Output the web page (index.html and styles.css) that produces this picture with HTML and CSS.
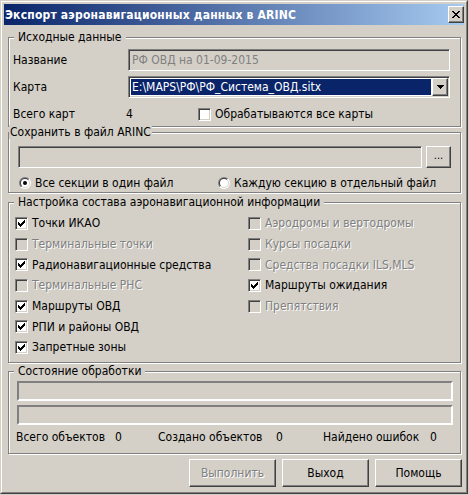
FILE: index.html
```html
<!DOCTYPE html>
<html lang="ru">
<head>
<meta charset="utf-8">
<title>Экспорт аэронавигационных данных в ARINC</title>
<link rel="stylesheet" href="styles.css">
</head>
<body>
<div class="window">
  <div class="frame">
    <div class="titlebar">
      <span class="title">Экспорт аэронавигационных данных в ARINC</span>
      <div class="close raised">
        <svg width="8" height="7" viewBox="0 0 8 7" shape-rendering="crispEdges"><path d="M0 0h2v1h-2z M6 0h2v1h-2z M1 1h2v1h-2z M5 1h2v1h-2z M2 2h4v1h-4z M3 3h2v1h-2z M2 4h4v1h-4z M1 5h2v1h-2z M5 5h2v1h-2z M0 6h2v1h-2z M6 6h2v1h-2z" fill="#000"/></svg>
      </div>
    </div>
    <div class="content">
      <div class="group g1">
        <span class="legend">Исходные данные</span>
        <div class="form-row">
          <span class="lbl">Название</span>
          <div class="edit sunken disabled-edit">РФ ОВД на 01-09-2015</div>
        </div>
        <div class="form-row">
          <span class="lbl">Карта</span>
          <div class="combo sunken">
            <div class="combo-sel">E:\MAPS\РФ\РФ_Система_ОВД.sitx</div>
            <div class="combo-btn raised">
              <svg width="7" height="4" viewBox="0 0 7 4" shape-rendering="crispEdges"><path d="M0 0h7v1h-7z M1 1h5v1h-5z M2 2h3v1h-3z M3 3h1v1h-1z" fill="#000"/></svg>
            </div>
          </div>
        </div>
        <div class="form-row count-row">
          <span class="lbl lbl-count">Всего карт</span>
          <span class="count">4</span>
          <label class="check">
            <span class="cb"></span>
            <span>Обрабатываются все карты</span>
          </label>
        </div>
      </div>

      <div class="group g2">
        <span class="legend legend-tight">Сохранить в файл ARINC</span>
        <div class="file-row">
          <div class="edit sunken file-edit"></div>
          <div class="btn raised browse">...</div>
        </div>
        <div class="radio-row">
          <label class="radio">
            <svg width="12" height="12" viewBox="0 0 12 12">
              <defs>
                <linearGradient id="ro" x1="0" y1="0" x2="1" y2="1"><stop offset="0.5" stop-color="#808080"/><stop offset="0.5" stop-color="#ffffff"/></linearGradient>
                <linearGradient id="ri" x1="0" y1="0" x2="1" y2="1"><stop offset="0.5" stop-color="#404040"/><stop offset="0.5" stop-color="#d4d0c8"/></linearGradient>
              </defs>
              <circle cx="6" cy="6" r="6" fill="url(#ro)"/>
              <circle cx="6" cy="6" r="5" fill="url(#ri)"/>
              <circle cx="6" cy="6" r="4" fill="#fff"/>
              <circle cx="6" cy="6" r="2" fill="#000"/>
            </svg>
            <span>Все секции в один файл</span>
          </label>
          <label class="radio">
            <svg width="12" height="12" viewBox="0 0 12 12">
              <circle cx="6" cy="6" r="6" fill="url(#ro)"/>
              <circle cx="6" cy="6" r="5" fill="url(#ri)"/>
              <circle cx="6" cy="6" r="4" fill="#fff"/>
            </svg>
            <span>Каждую секцию в отдельный файл</span>
          </label>
        </div>
      </div>

      <div class="group g3">
        <span class="legend">Настройка состава аэронавигационной информации</span>
        <div class="check-grid">
          <label class="check"><span class="cb checked"></span><span>Точки ИКАО</span></label>
          <label class="check disabled"><span class="cb"></span><span>Терминальные точки</span></label>
          <label class="check"><span class="cb checked"></span><span>Радионавигационные средства</span></label>
          <label class="check disabled"><span class="cb"></span><span>Терминальные РНС</span></label>
          <label class="check"><span class="cb checked"></span><span>Маршруты ОВД</span></label>
          <label class="check"><span class="cb checked"></span><span>РПИ и районы ОВД</span></label>
          <label class="check"><span class="cb checked"></span><span>Запретные зоны</span></label>
          <label class="check disabled"><span class="cb"></span><span>Аэродромы и вертодромы</span></label>
          <label class="check disabled"><span class="cb"></span><span>Курсы посадки</span></label>
          <label class="check disabled"><span class="cb"></span><span>Средства посадки ILS,MLS</span></label>
          <label class="check"><span class="cb checked"></span><span>Маршруты ожидания</span></label>
          <label class="check disabled"><span class="cb"></span><span>Препятствия</span></label>
        </div>
      </div>

      <div class="group g4">
        <span class="legend">Состояние обработки</span>
        <div class="bar"></div>
        <div class="bar bar2"></div>
        <div class="stats">
          <span>Всего объектов</span><span>0</span>
          <span>Создано объектов</span><span>0</span>
          <span>Найдено ошибок</span><span>0</span>
        </div>
      </div>

      <div class="buttons">
        <div class="btn raised dlg-btn disabled-text">Выполнить</div>
        <div class="btn raised dlg-btn">Выход</div>
        <div class="btn raised dlg-btn">Помощь</div>
      </div>
    </div>
  </div>
</div>
</body>
</html>
```
FILE: styles.css
```css
html, body {
  margin: 0;
  padding: 0;
  background: #d4d0c8;
}
body {
  font-family: "DejaVu Sans Condensed", "Liberation Sans", sans-serif;
  font-size: 12px;
  color: #000;
}
.window {
  width: 468px;
  height: 494px;
  box-sizing: border-box;
  border: 1px solid;
  border-color: #d4d0c8 #404040 #404040 #d4d0c8;
  background: #d4d0c8;
}
.frame {
  height: 100%;
  box-sizing: border-box;
  border: 1px solid;
  border-color: #fff #808080 #808080 #fff;
  padding: 2px;
  display: flex;
  flex-direction: column;
}
.raised {
  box-sizing: border-box;
  background: #d4d0c8;
  border: 1px solid;
  border-color: #fff #404040 #404040 #fff;
  box-shadow: inset -1px -1px 0 #808080, inset 1px 1px 0 #d4d0c8;
}
.sunken {
  box-sizing: border-box;
  border: 1px solid;
  border-color: #808080 #fff #fff #808080;
  box-shadow: inset 1px 1px 0 #404040, inset -1px -1px 0 #d4d0c8;
}
.titlebar {
  height: 21px;
  flex: none;
  background: linear-gradient(to right, #0a246a, #a6caf0);
  display: flex;
  align-items: center;
  justify-content: space-between;
  padding-left: 1px;
}
.title {
  color: #fff;
  font-weight: bold;
  font-size: 12px;
  line-height: 14px;
  letter-spacing: 0.2px;
}
.close {
  width: 16px;
  height: 17px;
  display: flex;
  align-items: center;
  justify-content: center;
}
.content {
  padding: 12px 2px 0 4px;
  display: flex;
  flex-direction: column;
}
.group {
  position: relative;
  box-sizing: border-box;
  width: 453px;
  border: 1px solid #808080;
  box-shadow: inset 1px 1px 0 #fff, 1px 1px 0 #fff;
}
.legend {
  position: absolute;
  top: -8px;
  left: 5px;
  padding: 0 4px;
  line-height: 14px;
  background: #d4d0c8;
  white-space: nowrap;
}
.legend-tight {
  left: 0;
  padding: 0 1px;
}
/* group 1 */
.g1 {
  padding: 11px 10px 1px 4px;
  display: flex;
  flex-direction: column;
  gap: 5px;
}
.form-row {
  display: flex;
  align-items: center;
  height: 22px;
}
.lbl {
  width: 115px;
  flex: none;
}
.lbl-count {
  width: 113px;
}
.count {
  width: 72px;
  flex: none;
}
.edit {
  height: 22px;
  background: #d4d0c8;
  line-height: 20px;
  padding-left: 3px;
  white-space: nowrap;
  overflow: hidden;
}
.disabled-edit {
  width: 322px;
  color: #808080;
}
.combo {
  width: 322px;
  height: 22px;
  padding: 1px;
  display: flex;
  background: #fff;
}
.combo-sel {
  flex: 1;
  margin: 1px 1px 1px 1px;
  background: #0a246a;
  color: #fff;
  line-height: 16px;
  padding-left: 1px;
  white-space: nowrap;
  overflow: hidden;
}
.combo-btn {
  width: 16px;
  flex: none;
  display: flex;
  align-items: center;
  justify-content: center;
}
/* checkbox */
.check {
  display: flex;
  align-items: center;
  gap: 4px;
  white-space: nowrap;
}
.cb {
  width: 13px;
  height: 13px;
  flex: none;
  box-sizing: border-box;
  border: 1px solid;
  border-color: #808080 #fff #fff #808080;
  box-shadow: inset 1px 1px 0 #404040, inset -1px -1px 0 #d4d0c8;
  background: #fff;
  position: relative;
}
.cb.checked::after {
  content: "";
  position: absolute;
  left: 2px;
  top: 2px;
  width: 7px;
  height: 7px;
  background: url("data:image/svg+xml,%3Csvg xmlns='http://www.w3.org/2000/svg' width='7' height='7' shape-rendering='crispEdges'%3E%3Cpath d='M6 0h1v3h-1z M5 1h1v3h-1z M4 2h1v3h-1z M3 3h1v3h-1z M2 4h1v3h-1z M1 3h1v3h-1z M0 2h1v3h-1z' fill='%23000'/%3E%3C/svg%3E") no-repeat;
}
.check.disabled {
  color: #808080;
  text-shadow: 1px 1px 0 #fff;
}
.check.disabled .cb {
  background: #d4d0c8;
}
/* group 2 */
.g2 {
  margin-top: 5px;
  padding: 13px 9px 1px 9px;
}
.file-row {
  display: flex;
  gap: 4px;
}
.file-edit {
  width: 404px;
}
.btn {
  display: flex;
  align-items: center;
  justify-content: center;
}
.browse {
  width: 25px;
  height: 22px;
  padding-bottom: 3px;
  font-size: 11px;
}
.radio-row {
  margin-top: 7px;
  height: 16px;
  margin-left: 1px;
  display: grid;
  grid-template-columns: 199px auto;
  align-items: center;
}
.radio {
  display: flex;
  align-items: center;
  gap: 4px;
  white-space: nowrap;
}
.radio svg {
  flex: none;
}
/* group 3 */
.g3 {
  margin-top: 9px;
  padding: 10px 6px 4px 6px;
}
.check-grid {
  display: grid;
  grid-auto-flow: column;
  grid-template-rows: repeat(7, 20.7px);
  grid-template-columns: 233px auto;
}
/* group 4 */
.g4 {
  margin-top: 8px;
  padding: 9px 7px 7px 8px;
}
.bar {
  height: 20px;
  box-sizing: border-box;
  border: 2px solid;
  border-color: #808080 #fff #fff #808080;
}
.bar2 {
  margin-top: 4px;
}
.stats {
  margin-top: 4px;
  margin-left: -1px;
  height: 17px;
  display: grid;
  grid-template-columns: 99px 43px 118px 47px 107px auto;
  align-items: center;
  white-space: nowrap;
}
/* buttons */
.buttons {
  margin-top: 5px;
  width: 454px;
  display: flex;
  justify-content: flex-end;
  gap: 6px;
}
.dlg-btn {
  width: 87px;
  height: 28px;
}
.disabled-text {
  color: #808080;
  text-shadow: 1px 1px 0 #fff;
}
```
